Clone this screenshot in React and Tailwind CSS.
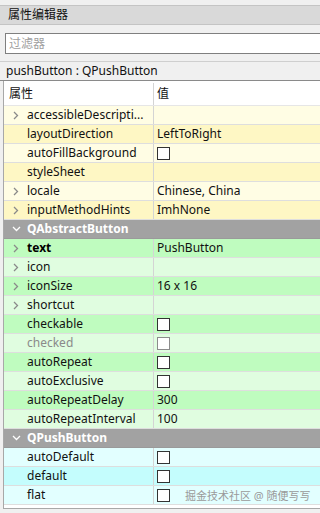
import React from 'react';

const font = { fontFamily: '"Noto Sans", "Noto Sans CJK SC", sans-serif' };

function Chevron({ open, light }) {
  if (open) {
    return (
      <svg width="9" height="6" viewBox="0 0 9 6" className={light ? 'text-white' : 'text-gray-500'}>
        <path d="M1 1l3.5 3.5L8 1" fill="none" stroke="currentColor" strokeWidth="1.3" />
      </svg>
    );
  }
  return (
    <svg width="6" height="9" viewBox="0 0 6 9" className="text-[#8a8a8a]">
      <path d="M1 1l3.5 3.5L1 8" fill="none" stroke="currentColor" strokeWidth="1.3" />
    </svg>
  );
}

function Check({ disabled }) {
  return (
    <div className={`w-[13px] h-[13px] bg-white border ${disabled ? 'border-[#8c8c8c]' : 'border-[#333]'}`} />
  );
}

function Row({ name, value, bg, expandable, bold, disabled, check }) {
  return (
    <div className={`flex h-[19px] border-b border-[#dedede] ${bg}`}>
      <div className="w-[150px] flex items-center border-r border-[#d4d4d4] shrink-0">
        <div className="w-[23px] flex justify-center pl-[1px]">{expandable && <Chevron />}</div>
        <span className={`text-[12px] whitespace-nowrap ${bold ? 'font-bold text-black' : disabled ? 'text-[#8a8a8a]' : 'text-[#111]'}`}>
          {name}
        </span>
      </div>
      <div className="flex items-center pl-[3px] text-[12px] text-[#111] whitespace-nowrap">
        {check ? <Check disabled={disabled} /> : value}
      </div>
    </div>
  );
}

function Group({ name }) {
  return (
    <div className="flex items-center h-[19px] bg-[#a2a2a2] border-b border-[#9a9a9a]">
      <div className="w-[23px] flex justify-center pl-[1px]">
        <Chevron open light />
      </div>
      <span className="text-[12px] font-bold text-white">{name}</span>
    </div>
  );
}

const Y1 = 'bg-[#fffde4]';
const Y2 = 'bg-[#fef7c4]';
const G1 = 'bg-[#e0fde0]';
const G2 = 'bg-[#bffcbf]';
const C1 = 'bg-[#e2ffff]';
const C2 = 'bg-[#c4fdfd]';

export default function App() {
  return (
    <div className="w-[320px] h-[513px] bg-[#f0f0f0] overflow-hidden relative" style={font}>
      {/* 标题栏 */}
      <div className="pt-[5px]">
        <div className="h-[20px] bg-[#d9d9d9] border-y border-[#c4c4c4] flex items-center pl-[8px] text-[12px] text-[#111]">
          属性编辑器
        </div>
      </div>

      {/* 过滤器 */}
      <div className="mt-[8px] ml-[5px] h-[21px] bg-white border border-r-0 border-[#7f7f7f] flex items-center pl-[3px] text-[12px] text-[#a0a0a0]">
        过滤器
      </div>

      {/* 对象名 */}
      <div className="mt-[7px] h-[20px] border-t border-[#cfcfcf] border-b border-b-[#8a8a8a] flex items-center pl-[6px] text-[12px] text-[#111]">
        pushButton : QPushButton
      </div>

      {/* 属性表 */}
      <div className="ml-[3px] border-l border-b border-[#a8a8a8] bg-white">
        <div className="flex h-[25px] pt-[2px] bg-white border-b border-[#e6e6e6]">
          <div className="w-[150px] flex items-center pl-[5px] border-r border-[#d4d4d4] text-[12px] text-[#111]">属性</div>
          <div className="flex items-center pl-[3px] text-[12px] text-[#111]">值</div>
        </div>
        <Row name="accessibleDescripti..." bg={Y1} expandable />
        <Row name="layoutDirection" value="LeftToRight" bg={Y2} />
        <Row name="autoFillBackground" bg={Y1} check />
        <Row name="styleSheet" bg={Y2} />
        <Row name="locale" value="Chinese, China" bg={Y1} expandable />
        <Row name="inputMethodHints" value="ImhNone" bg={Y2} expandable />
        <Group name="QAbstractButton" />
        <Row name="text" value="PushButton" bg={G2} expandable bold />
        <Row name="icon" bg={G1} expandable />
        <Row name="iconSize" value="16 x 16" bg={G2} expandable />
        <Row name="shortcut" bg={G1} expandable />
        <Row name="checkable" bg={G2} check />
        <Row name="checked" bg={G1} check disabled />
        <Row name="autoRepeat" bg={G2} check />
        <Row name="autoExclusive" bg={G1} check />
        <Row name="autoRepeatDelay" value="300" bg={G2} />
        <Row name="autoRepeatInterval" value="100" bg={G1} />
        <Group name="QPushButton" />
        <Row name="autoDefault" bg={C1} check />
        <Row name="default" bg={C2} check />
        <Row name="flat" bg={C1} check />
        <div className="h-[3px] bg-white" />
      </div>

      {/* 水印 */}
      <div className="absolute left-[185px] top-[488px] text-[11px] text-[#9a9a9a] whitespace-nowrap">
        掘金技术社区 @ 随便写写
      </div>
    </div>
  );
}
